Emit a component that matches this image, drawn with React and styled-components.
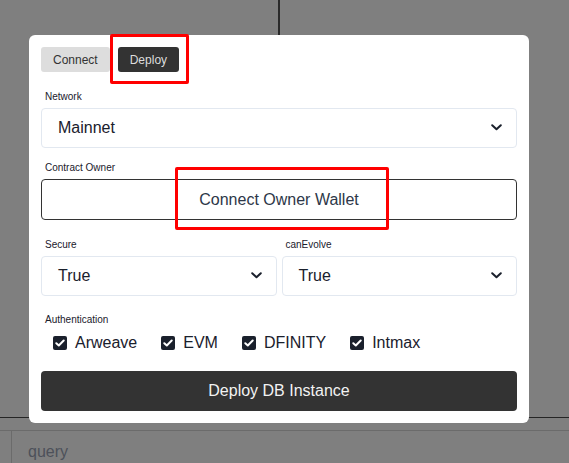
import React from "react";
import styled, { createGlobalStyle } from "styled-components";

const Global = createGlobalStyle`
  html, body { margin: 0; padding: 0; }
  body {
    font-family: "Liberation Sans", Arial, sans-serif;
    background: #ffffff;
    width: 569px;
    height: 463px;
    overflow: hidden;
  }
  * { box-sizing: border-box; }
`;

/* ---------- page behind the overlay ---------- */
const Page = styled.div`
  position: relative;
  width: 569px;
  height: 463px;
  display: flex;
  flex-direction: column;
  background: #fff;
`;

const TopArea = styled.div`
  height: 419px;
  display: flex;
  border-bottom: 1px solid #4a4a4a;
`;

const LeftPane = styled.div`
  width: 280px;
  border-right: 2px solid #555;
`;

const RightPane = styled.div`
  flex: 1;
`;

const QueryRow = styled.div`
  margin-top: 12px;
  flex: 1;
  display: flex;
  border-top: 1px solid #d6d6d6;
`;

const QueryGutter = styled.div`
  width: 12px;
  border-right: 1px solid #d6d6d6;
`;

const QueryInput = styled.input`
  flex: 1;
  border: none;
  outline: none;
  background: transparent;
  font-family: "Liberation Sans", Arial, sans-serif;
  font-size: 16px;
  padding: 9px 0 0 16px;
  height: 32px;
  color: #1a202c;
  &::placeholder { color: #9aa3b4; }
`;

/* ---------- overlay + modal ---------- */
const Overlay = styled.div`
  position: absolute;
  inset: 0;
  background: rgba(0, 0, 0, 0.5);
  padding: 35px 0 0 29px;
`;

const Modal = styled.div`
  width: 500px;
  background: #fff;
  border-radius: 6px;
  padding: 12px;
  display: flex;
  flex-direction: column;
`;

const Tabs = styled.div`
  display: flex;
  gap: 8px;
`;

const Tab = styled.button`
  height: 25px;
  padding: 0 12px;
  border: none;
  border-radius: 3px;
  font-family: "Liberation Sans", Arial, sans-serif;
  font-size: 12px;
  background: ${(p) => (p.$active ? "#333333" : "#dddddd")};
  color: ${(p) => (p.$active ? "#dddddd" : "#333333")};
  cursor: pointer;
`;

const Field = styled.div`
  margin-top: ${(p) => p.$mt}px;
  display: flex;
  flex-direction: column;
  flex: 1;
`;

const Label = styled.div`
  font-size: 10px;
  line-height: 12px;
  height: 12px;
  padding-left: 4px;
  color: #1a202c;
  margin-bottom: ${(p) => (p.$flush ? 0 : 5)}px;
`;

const Row = styled.div`
  display: flex;
  gap: 5px;
  margin-top: ${(p) => p.$mt}px;
`;

const SelectBox = styled.div`
  position: relative;
  height: 40px;
  border: 1px solid #e2e8f0;
  border-radius: 4px;
  display: flex;
  align-items: center;
  padding-left: 16px;
  font-size: 16px;
  color: #1a202c;
  background: #fff;
`;

const Chevron = styled.svg`
  position: absolute;
  right: 14px;
  top: 50%;
  margin-top: -4px;
  width: 11px;
  height: 7px;
`;

const OwnerButton = styled.button`
  height: 41px;
  width: 100%;
  border: 1px solid #333;
  border-radius: 4px;
  background: #fff;
  font-family: "Liberation Sans", Arial, sans-serif;
  font-size: 16px;
  color: #2d3748;
  cursor: pointer;
`;

const CheckRow = styled.div`
  display: flex;
  align-items: center;
  gap: 24px;
  height: 20px;
  margin-top: 7px;
  padding-left: 12px;
`;

const CheckItem = styled.label`
  display: flex;
  align-items: center;
  gap: 8px;
  font-size: 16px;
  color: #1a202c;
`;

const Box = styled.span`
  width: 14px;
  height: 14px;
  border-radius: 2px;
  background: #1a202c;
  display: flex;
  align-items: center;
  justify-content: center;
`;

const DeployButton = styled.button`
  margin-top: 18px;
  height: 40px;
  width: 100%;
  border: none;
  border-radius: 4px;
  background: #333333;
  color: #f2f2f2;
  font-family: "Liberation Sans", Arial, sans-serif;
  font-size: 16px;
  cursor: pointer;
`;

/* ---------- red annotation marks ---------- */
const Mark = styled.div`
  position: absolute;
  border: 3px solid #ff0000;
  border-radius: 2px;
  pointer-events: none;
`;

const ChevronIcon = () => (
  <Chevron viewBox="0 0 11 7">
    <polyline
      points="1.2,1.2 5.5,5.3 9.8,1.2"
      fill="none"
      stroke="#1a202c"
      strokeWidth="2"
      strokeLinecap="round"
      strokeLinejoin="round"
    />
  </Chevron>
);

const Select = ({ value }) => (
  <SelectBox>
    {value}
    <ChevronIcon />
  </SelectBox>
);

const Check = ({ label }) => (
  <CheckItem>
    <Box>
      <svg width="10" height="8" viewBox="0 0 10 8">
        <polyline
          points="1.3,4.2 3.8,6.5 8.7,1.5"
          fill="none"
          stroke="#fff"
          strokeWidth="2"
          strokeLinecap="round"
          strokeLinejoin="round"
        />
      </svg>
    </Box>
    {label}
  </CheckItem>
);

export default function App() {
  return (
    <>
      <Global />
      <Page>
        <TopArea>
          <LeftPane />
          <RightPane />
        </TopArea>
        <QueryRow>
          <QueryGutter />
          <QueryInput placeholder="query" readOnly />
        </QueryRow>

        <Overlay>
          <Modal>
            <Tabs>
              <Tab>Connect</Tab>
              <Tab $active>Deploy</Tab>
            </Tabs>

            <Field $mt={19}>
              <Label>Network</Label>
              <Select value="Mainnet" />
            </Field>

            <Field $mt={14}>
              <Label>Contract Owner</Label>
              <OwnerButton>Connect Owner Wallet</OwnerButton>
            </Field>

            <Row $mt={19}>
              <Field $mt={0}>
                <Label>Secure</Label>
                <Select value="True" />
              </Field>
              <Field $mt={0}>
                <Label>canEvolve</Label>
                <Select value="True" />
              </Field>
            </Row>

            <Field $mt={18}>
              <Label $flush>Authentication</Label>
            </Field>
            <CheckRow>
              <Check label="Arweave" />
              <Check label="EVM" />
              <Check label="DFINITY" />
              <Check label="Intmax" />
            </CheckRow>

            <DeployButton>Deploy DB Instance</DeployButton>
          </Modal>
        </Overlay>

        <Mark style={{ left: 110, top: 34, width: 79, height: 50 }} />
        <Mark style={{ left: 175, top: 167, width: 214, height: 63 }} />
      </Page>
    </>
  );
}
